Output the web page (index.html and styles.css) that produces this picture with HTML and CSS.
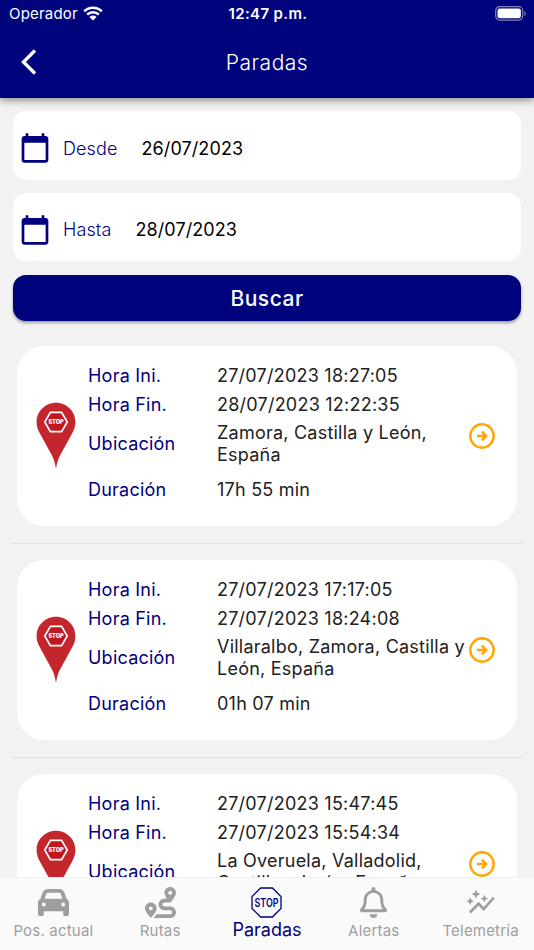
FILE: index.html
```html
<!DOCTYPE html>
<html lang="es">
<head>
  <meta charset="UTF-8" />
  <meta name="viewport" content="width=device-width, initial-scale=1.0" />
  <title>Paradas</title>
  <link rel="stylesheet" href="styles.css">
</head>
<body>

  <!-- iconos compartidos -->
  <svg class="sprite">
    <symbol id="calendar" viewBox="0 0 24 24">
      <path d="M20 3h-1V1h-2v2H7V1H5v2H4c-1.1 0-2 .9-2 2v16c0 1.1.9 2 2 2h16c1.1 0 2-.9 2-2V5c0-1.1-.9-2-2-2zm0 18H4V8h16v13z" />
    </symbol>
    <symbol id="pin" viewBox="0 0 40 68">
      <path d="M20 .8C9.300.8.6 9.400.6 20.200c0 4.600 1.500 8 3.600 11.800L16 53.500c2 4 3.200 8 4 13.500.8-5.500 2-9.500 4-13.500L35.800 32c2.100-3.800 3.600-7.200 3.600-11.800C39.400 9.400 30.700.8 20 .8z" fill="#c4262e" />
      <path d="M14.400 10.400h11.200l5.600 9.600-5.600 9.600H14.400L8.800 20z" fill="#c01820" stroke="#fff" stroke-width="1.700" />
      <text x="20" y="21.700" text-anchor="middle" class="pin-text">STOP</text>
    </symbol>
    <symbol id="arrow" viewBox="0 0 26 26">
      <circle cx="13" cy="13" r="11.700" fill="none" stroke="#ffa500" stroke-width="2.400" />
      <path d="M8 13h9M12.900 8.700l4.300 4.300-4.300 4.300" fill="none" stroke="#ffa500" stroke-width="2.500" />
    </symbol>
  </svg>

  <div class="app">
    <header class="header">
      <div class="status-bar">
        <div class="carrier">
          <span>Operador</span>
          <svg class="wifi" viewBox="0 0 20 15">
            <path d="M1.200 5.300a12.500 12.500 0 0 1 17.600 0M4.200 8.500a8.300 8.300 0 0 1 11.600 0" fill="none" stroke="#fff" stroke-width="2.500" />
            <path d="M6.400 10.900a5.200 5.200 0 0 1 7.200 0L10 14.500z" fill="#fff" />
          </svg>
        </div>
        <span class="time">12:47 p.m.</span>
        <svg class="battery" viewBox="0 0 32 15">
          <rect x=".7" y=".7" width="27" height="13.400" rx="4" fill="none" stroke="#8082c0" stroke-width="1.200" />
          <rect x="2.500" y="2.500" width="23.400" height="9.800" rx="2.200" fill="#fff" />
          <path d="M29.400 5v5c1.900-.7 1.900-4.300 0-5z" fill="#8082c0" />
        </svg>
      </div>
      <div class="nav-bar">
        <svg class="back" viewBox="0 0 16 26"><path d="M14 1.500L2.500 13 14 24.500" fill="none" stroke="#fff" stroke-width="3.400" /></svg>
        <h1>Paradas</h1>
      </div>
    </header>

    <main class="content">
      <div class="filters">
        <div class="date-field">
          <svg class="calendar"><use href="#calendar" /></svg>
          <span class="date-label">Desde</span>
          <span class="date-value">26/07/2023</span>
        </div>
        <div class="date-field">
          <svg class="calendar"><use href="#calendar" /></svg>
          <span class="date-label">Hasta</span>
          <span class="date-value">28/07/2023</span>
        </div>
        <button class="search">Buscar</button>
      </div>

      <div class="stops">
        <div class="stop">
          <svg class="pin"><use href="#pin" /></svg>
          <dl class="details">
            <dt>Hora Ini.</dt><dd>27/07/2023 18:27:05</dd>
            <dt>Hora Fin.</dt><dd>28/07/2023 12:22:35</dd>
            <dt>Ubicación</dt><dd>Zamora, Castilla y León,<br>España</dd>
            <dt>Duración</dt><dd>17h 55 min</dd>
          </dl>
          <svg class="arrow"><use href="#arrow" /></svg>
        </div>
        <hr>
        <div class="stop">
          <svg class="pin"><use href="#pin" /></svg>
          <dl class="details">
            <dt>Hora Ini.</dt><dd>27/07/2023 17:17:05</dd>
            <dt>Hora Fin.</dt><dd>27/07/2023 18:24:08</dd>
            <dt>Ubicación</dt><dd>Villaralbo, Zamora, Castilla y<br>León, España</dd>
            <dt>Duración</dt><dd>01h 07 min</dd>
          </dl>
          <svg class="arrow"><use href="#arrow" /></svg>
        </div>
        <hr>
        <div class="stop">
          <svg class="pin"><use href="#pin" /></svg>
          <dl class="details">
            <dt>Hora Ini.</dt><dd>27/07/2023 15:47:45</dd>
            <dt>Hora Fin.</dt><dd>27/07/2023 15:54:34</dd>
            <dt>Ubicación</dt><dd>La Overuela, Valladolid,<br>Castilla y León, España</dd>
          </dl>
          <svg class="arrow"><use href="#arrow" /></svg>
        </div>
      </div>
    </main>

    <nav class="tab-bar">
      <a class="tab">
        <svg class="tab-icon" viewBox="0 0 512 512"><path d="M135.2 117.4L109.1 192H402.9l-26.1-74.6C372.3 104.6 360.2 96 346.6 96H165.4c-13.6 0-25.7 8.6-30.2 21.4zM39.6 196.8L74.8 96.3C88.3 57.8 124.6 32 165.4 32H346.6c40.8 0 77.1 25.8 90.6 64.3l35.2 100.5c23.2 9.6 39.6 32.5 39.6 59.2V400v48c0 17.7-14.3 32-32 32H448c-17.7 0-32-14.3-32-32V400H96v48c0 17.7-14.3 32-32 32H32c-17.7 0-32-14.3-32-32V400 256c0-26.7 16.4-49.6 39.6-59.2zM128 288a32 32 0 1 0 -64 0 32 32 0 1 0 64 0zm288 32a32 32 0 1 0 0-64 32 32 0 1 0 0 64z" /></svg>
        <span>Pos. actual</span>
      </a>
      <a class="tab">
        <svg class="tab-icon" viewBox="0 0 512 512"><path d="M512 96c0 50.2-59.1 125.1-84.6 155c-3.8 4.4-9.4 6.1-14.5 5H320c-17.7 0-32 14.3-32 32s14.3 32 32 32h96c53 0 96 43 96 96s-43 96-96 96H139.6c8.7-9.9 19.3-22.6 30-36.8c6.3-8.4 12.8-17.6 19-27.2H416c17.7 0 32-14.3 32-32s-14.3-32-32-32H320c-53 0-96-43-96-96s43-96 96-96h39.8c-21-31.5-39.8-67.7-39.8-96c0-53 43-96 96-96s96 43 96 96zM117.1 489.1c-3.8 4.3-7.2 8.1-10.1 11.3l-1.8 2-.2-.2c-6 4.6-14.6 4-20-1.8C59.8 473 0 402.5 0 352c0-53 43-96 96-96s96 43 96 96c0 30-21.1 67-43.5 97.9c-10.7 14.7-21.7 28-30.8 38.5l-.6 .7zM128 352a32 32 0 1 0 -64 0 32 32 0 1 0 64 0zM416 128a32 32 0 1 0 0-64 32 32 0 1 0 0 64z" /></svg>
        <span>Rutas</span>
      </a>
      <a class="tab active">
        <svg class="tab-icon" viewBox="0 0 31 31">
          <path d="M9.600 1h11.800L30 9.600v11.800L21.400 30H9.600L1 21.400V9.600z" fill="none" stroke="#000080" stroke-width="1.300" />
          <text x="15.500" y="19.600" text-anchor="middle" textLength="24" lengthAdjust="spacingAndGlyphs" class="stop-text">STOP</text>
        </svg>
        <span>Paradas</span>
      </a>
      <a class="tab">
        <svg class="tab-icon" viewBox="0 0 448 512"><path d="M439.39 362.29c-19.32-20.76-55.47-51.99-55.47-154.29 0-77.7-54.48-139.9-127.94-155.16V32c0-17.67-14.32-32-31.98-32s-31.98 14.33-31.98 32v20.84C118.56 68.1 64.08 130.3 64.08 208c0 102.3-36.15 133.53-55.47 154.29-6 6.45-8.66 14.16-8.61 21.71.11 16.4 12.98 32 32.1 32h383.8c19.12 0 32-15.6 32.1-32 .05-7.55-2.61-15.27-8.61-21.71zM67.53 368c21.22-27.97 44.42-74.33 44.53-159.42 0-.2-.06-.38-.06-.58 0-61.86 50.14-112 112-112s112 50.14 112 112c0 .2-.06.38-.06.58.11 85.1 23.31 131.46 44.53 159.42H67.53zM224 512c35.32 0 63.97-28.65 63.97-64H160.03c0 35.35 28.65 64 63.97 64z" /></svg>
        <span>Alertas</span>
      </a>
      <a class="tab">
        <svg class="tab-icon" viewBox="0 0 24 24"><path d="M14.060 9.940L12 9l2.060-.94L15 6l.94 2.060L18 9l-2.060.94L15 12zM4 14l.94-2.060L7 11l-2.060-.94L4 8l-.94 2.060L1 11l2.060.94zm4.500-5l1.090-2.410L12 5.500 9.590 4.410 8.500 2 7.410 4.410 5 5.500l2.410 1.090zm-4 11.500l6-6.010 4 4L23 8.930l-1.410-1.410-7.090 7.970-4-4L3 19z" /></svg>
        <span>Telemetría</span>
      </a>
    </nav>
  </div>

</body>
</html>
```
FILE: styles.css
```css
* {
  box-sizing: border-box;
}
body {
  margin: 0;
  font-family: Inter, 'Noto Sans', sans-serif;
  background-color: #f2f2f2;
}
svg {
  display: block;
  flex: none;
}
.sprite {
  display: none;
}
.app {
  display: flex;
  flex-direction: column;
  height: 950px;
  overflow: hidden;
}

/* Cabecera */
.header {
  flex: none;
  height: 98px;
  background-color: #00047c;
  color: #fff;
  box-shadow: 0 2px 8px rgba(0, 0, 0, 0.45);
  z-index: 1;
}
.status-bar {
  display: grid;
  grid-template-columns: 1fr auto 1fr;
  align-items: center;
  height: 27px;
  padding: 0 7px 0 9px;
  font-size: 15px;
}
.carrier {
  display: flex;
  align-items: center;
  gap: 5px;
  letter-spacing: 0.2px;
}
.wifi {
  width: 20px;
  height: 15px;
  margin-bottom: 1px;
}
.time {
  font-weight: 600;
  letter-spacing: 0.35px;
}
.battery {
  width: 32px;
  height: 15px;
  justify-self: end;
}
.nav-bar {
  display: grid;
  grid-template-columns: 60px 1fr 60px;
  align-items: center;
  height: 71px;
}
.back {
  width: 16px;
  height: 26px;
  margin: 0 0 2px 21px;
}
h1 {
  margin: 0;
  text-align: center;
  font-size: 21px;
  font-weight: 300;
  letter-spacing: 0.5px;
}

/* Filtros */
.content {
  flex: 1;
  min-height: 0;
  overflow: hidden;
}
.filters {
  display: flex;
  flex-direction: column;
  gap: 13px;
  padding: 13px 13px 0;
}
.date-field {
  display: flex;
  align-items: center;
  height: 68.5px;
  padding: 6px 6px 0;
  border-radius: 13px;
  background-color: #fff;
  font-size: 18px;
}
.calendar {
  width: 32px;
  height: 32px;
  margin-right: 12px;
  fill: #000080;
}
.date-label {
  color: #000080;
  font-weight: 300;
  letter-spacing: 0.1px;
  margin-right: 24px;
}
.date-value {
  letter-spacing: 0.1px;
}
.search {
  height: 46px;
  margin-top: 1px;
  padding: 0;
  border: 0;
  border-radius: 13px;
  background-color: #00047c;
  color: #fff;
  font-family: inherit;
  font-size: 21px;
  font-weight: 500;
  letter-spacing: 0.5px;
  box-shadow: 0 2px 3px rgba(0, 0, 0, 0.35);
}

/* Lista de paradas */
.stops {
  padding: 25px 11px 0;
}
.stop {
  display: flex;
  height: 180px;
  margin: 0 6px;
  border-radius: 27px;
  background-color: #fff;
}
.pin {
  width: 40px;
  height: 68px;
  margin: 56px 12px 0 19px;
}
.pin-text {
  font-size: 5.5px;
  font-weight: 900;
  fill: #fff;
}
.details {
  display: grid;
  grid-template-columns: 129px 252px;
  grid-template-rows: 28px 29px 50px 41px;
  align-items: center;
  margin: 16px 0 0;
  font-size: 18px;
  line-height: 22px;
  letter-spacing: 0.23px;
  white-space: nowrap;
}
dt {
  color: #000080;
}
dd {
  margin: 0;
  color: #212121;
}
.arrow {
  width: 26px;
  height: 26px;
  margin-top: 77px;
}
hr {
  height: 1px;
  margin: 17px 0 16px;
  border: 0;
  background-color: #e0e0e0;
}

/* Barra inferior */
.tab-bar {
  flex: none;
  display: grid;
  grid-template-columns: repeat(5, 1fr);
  height: 73px;
  background-color: #fafafa;
  border-top: 1px solid #f0f0f0;
  z-index: 1;
}
.tab {
  display: flex;
  flex-direction: column;
  align-items: center;
  padding-top: 9px;
  color: #9e9e9e;
  fill: #9e9e9e;
  font-size: 15px;
  letter-spacing: 0.2px;
}
.tab-icon {
  width: 31px;
  height: 31px;
}
.tab span {
  line-height: 25px;
}
.tab.active {
  color: #000080;
  font-size: 18px;
  letter-spacing: 0;
}
.tab.active span {
  line-height: 24px;
}
.stop-text {
  font-size: 11.5px;
  font-weight: 600;
  letter-spacing: 0;
  fill: #000080;
}
```
